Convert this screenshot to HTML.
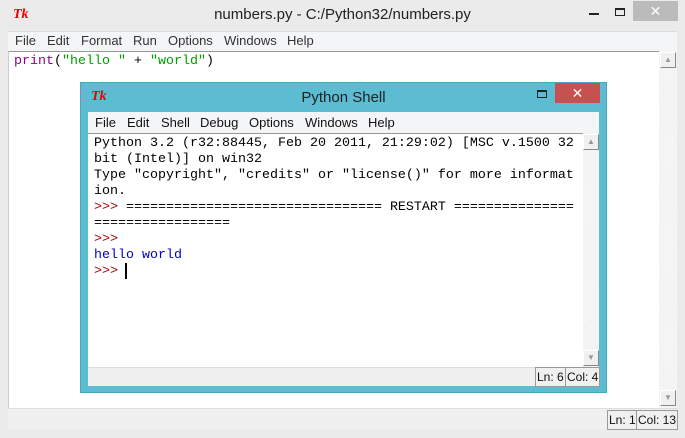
<!DOCTYPE html><html><head><style>
*{margin:0;padding:0;box-sizing:border-box}
html,body{width:685px;height:438px;overflow:hidden}
body{background:#ebebeb;position:relative;font-family:"Liberation Sans",sans-serif}
.a{position:absolute}
.mono{font-family:"Liberation Mono",monospace;font-size:13.33px;line-height:16px;white-space:pre}
.m{position:absolute;font-size:13px;color:#333}
.sb{background:#f4f4f4;background-image:repeating-linear-gradient(45deg,#eee 0 1px,#fafafa 1px 2px)}
.btn{background:#f0f0f0;border:1px solid #fff;border-right-color:#888;border-bottom-color:#888}
.st{position:absolute;border:1px solid #999;font-size:12px;line-height:18px;height:20px;padding:0 1px;background:#f0f0f0;color:#111;white-space:nowrap;overflow:hidden}
</style></head><body>
<div class="a" style="left:13px;top:7px;color:#e00;font:italic bold 14px 'Liberation Serif',serif">Tk</div>
<div class="a" style="left:0;width:685px;top:6px;text-align:center;font-size:15px;color:#222">numbers.py - C:/Python32/numbers.py</div>
<div class="a" style="left:633px;top:1px;width:45px;height:20px;background:#bbb;color:#fff;text-align:center;font-size:14px;line-height:20px">✕</div>
<div class="a" style="left:589px;top:13px;width:10px;height:2px;background:#222"></div>
<div class="a" style="left:615px;top:8px;width:10px;height:8px;border:1px solid #222;border-top-width:2px"></div>
<div class="a" style="left:8px;top:31px;width:669px;height:20px;background:#f4f5f7;border-top:1px solid #ddd"></div>
<div class="m" style="left:15px;top:33px">File</div><div class="m" style="left:47px;top:33px">Edit</div><div class="m" style="left:81px;top:33px">Format</div><div class="m" style="left:133px;top:33px">Run</div><div class="m" style="left:168px;top:33px">Options</div><div class="m" style="left:224px;top:33px">Windows</div><div class="m" style="left:287px;top:33px">Help</div>
<div class="a" style="left:8px;top:51px;width:651px;height:357px;background:#fff;border-top:1px solid #999;border-left:1px solid #ccc"></div>
<div class="a mono" style="left:14px;top:54px"><span style="color:#900090">print</span>(<span style="color:#00a000">"hello "</span> + <span style="color:#00a000">"world"</span>)</div>
<div class="a sb" style="left:659px;top:51px;width:18px;height:357px"></div>
<div class="a btn" style="left:660px;top:52px;width:16px;height:16px;color:#999;font-size:8px;text-align:center;line-height:14px">▲</div>
<div class="a btn" style="left:660px;top:390px;width:16px;height:16px;color:#999;font-size:8px;text-align:center;line-height:14px">▼</div>
<div class="a" style="left:8px;top:408px;width:669px;height:22px;background:#f0f0f0;border-top:1px solid #ddd"></div>
<div class="st" style="left:607px;top:410px;width:30px">Ln: 1</div>
<div class="st" style="left:636px;top:410px;width:42px">Col: 13</div>

<div class="a" style="left:80px;top:82px;width:527px;height:311px;background:#5bbcd2;border:1px solid #4aa6ba"></div>
<div class="a" style="left:91px;top:89px;color:#e00;font:italic bold 14px 'Liberation Serif',serif">Tk</div>
<div class="a" style="left:80px;width:527px;top:89px;text-align:center;font-size:15px;color:#222">Python Shell</div>
<div class="a" style="left:555px;top:83px;width:45px;height:20px;background:#c75050;color:#fff;text-align:center;font-size:14px;line-height:20px">✕</div>
<div class="a" style="left:537px;top:90px;width:10px;height:8px;border:1px solid #222;border-top-width:2px"></div>
<div class="a" style="left:88px;top:112px;width:511px;height:21px;background:#f4f5f7"></div>
<div class="m" style="left:95px;top:115px;color:#111">File</div><div class="m" style="left:127px;top:115px;color:#111">Edit</div><div class="m" style="left:161px;top:115px;color:#111">Shell</div><div class="m" style="left:200px;top:115px;color:#111">Debug</div><div class="m" style="left:249px;top:115px;color:#111">Options</div><div class="m" style="left:305px;top:115px;color:#111">Windows</div><div class="m" style="left:368px;top:115px;color:#111">Help</div>
<div class="a" style="left:88px;top:133px;width:495px;height:234px;background:#fff;border-top:1px solid #999"></div>
<div class="a mono" style="left:94px;top:136px">Python 3.2 (r32:88445, Feb 20 2011, 21:29:02) [MSC v.1500 32
bit (Intel)] on win32
Type "copyright", "credits" or "license()" for more informat
ion.
<span style="color:#a00">&gt;&gt;&gt;</span> ================================ RESTART ===============
=================
<span style="color:#a00">&gt;&gt;&gt;</span>
<span style="color:#00c">hello world</span>
<span style="color:#a00">&gt;&gt;&gt;</span> </div>
<div class="a" style="left:125px;top:263px;width:2px;height:16px;background:#000"></div>
<div class="a sb" style="left:583px;top:133px;width:16px;height:234px"></div>
<div class="a btn" style="left:583px;top:134px;width:16px;height:16px;color:#999;font-size:8px;text-align:center;line-height:14px">▲</div>
<div class="a btn" style="left:583px;top:350px;width:16px;height:16px;color:#999;font-size:8px;text-align:center;line-height:14px">▼</div>
<div class="a" style="left:88px;top:367px;width:511px;height:19px;background:#f0f0f0;border-top:1px solid #ddd"></div>
<div class="st" style="left:535px;top:367px;width:31px">Ln: 6</div>
<div class="st" style="left:565px;top:367px;width:35px">Col: 4</div>
</body></html>
